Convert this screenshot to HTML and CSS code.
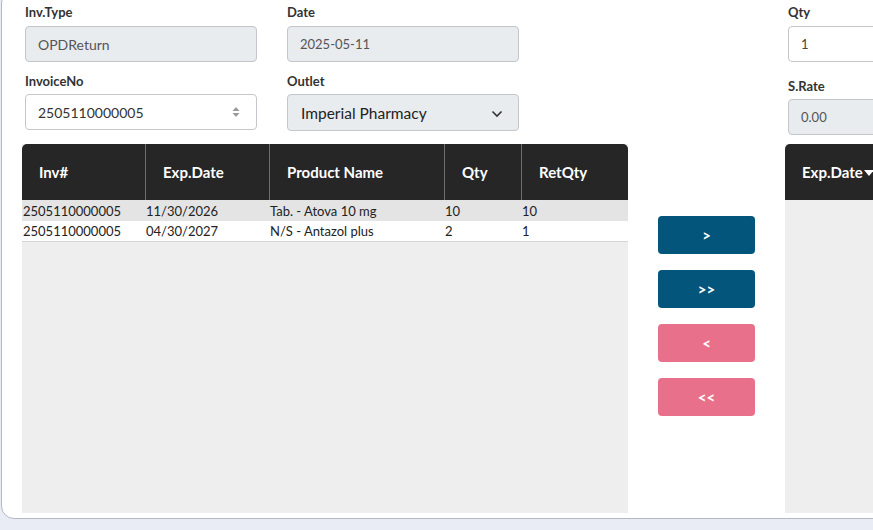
FILE: index.html
```html
<!DOCTYPE html>
<html>
<head>
<meta charset="utf-8">
<link rel="stylesheet" href="styles.css">
</head>
<body>
<div class="card">
  <div class="form">
    <div class="col">
      <div class="field">
        <label class="lbl">Inv.Type</label>
        <div class="inp ro">OPDReturn</div>
      </div>
      <div class="field">
        <label class="lbl">InvoiceNo</label>
        <div class="inp num">2505110000005
          <svg class="spin" width="10" height="14" viewBox="0 0 10 14"><path d="M5 2 L8.5 6 L1.5 6 Z" fill="#9a9a9a"/><path d="M5 12 L8.5 8 L1.5 8 Z" fill="#9a9a9a"/></svg>
        </div>
      </div>
    </div>
    <div class="col">
      <div class="field">
        <label class="lbl">Date</label>
        <div class="inp ro small">2025-05-11</div>
      </div>
      <div class="field">
        <label class="lbl">Outlet</label>
        <div class="inp ro sel">Imperial Pharmacy
          <svg class="chev" width="12" height="8" viewBox="0 0 12 8"><path d="M1.5 1.5 L6 6 L10.5 1.5" fill="none" stroke="#333" stroke-width="1.6"/></svg>
        </div>
      </div>
    </div>
    <div class="col spacer"></div>
    <div class="col">
      <div class="field">
        <label class="lbl">Qty</label>
        <div class="inp small">1</div>
      </div>
      <div class="field low">
        <label class="lbl">S.Rate</label>
        <div class="inp ro small">0.00</div>
      </div>
    </div>
  </div>

  <div class="main">
    <div class="grid">
      <div class="thead">
        <div class="th w1">Inv#</div>
        <div class="th w2">Exp.Date</div>
        <div class="th w3">Product Name</div>
        <div class="th w4">Qty</div>
        <div class="th w5">RetQty</div>
      </div>
      <div class="tbody">
        <div class="tr alt">
          <div class="td w1">2505110000005</div>
          <div class="td w2">11/30/2026</div>
          <div class="td w3">Tab. - Atova 10 mg</div>
          <div class="td w4">10</div>
          <div class="td w5">10</div>
        </div>
        <div class="tr">
          <div class="td w1">2505110000005</div>
          <div class="td w2">04/30/2027</div>
          <div class="td w3">N/S - Antazol plus</div>
          <div class="td w4">2</div>
          <div class="td w5">1</div>
        </div>
      </div>
    </div>

    <div class="actions">
      <button class="btn blue">&gt;</button>
      <button class="btn blue">&gt;&gt;</button>
      <button class="btn pink">&lt;</button>
      <button class="btn pink">&lt;&lt;</button>
    </div>

    <div class="grid right">
      <div class="thead">
        <div class="th">Exp.Date<svg class="caret" width="10" height="6" viewBox="0 0 10 6"><path d="M0 0 L10 0 L5 6 Z" fill="#fff"/></svg></div>
      </div>
    </div>
  </div>
</div>
</body>
</html>
```

FILE: styles.css
```css
html, body {
  margin: 0;
  padding: 0;
}
body {
  background: #e9ecf5;
  font-family: "Lato", "Open Sans", sans-serif;
  color: #333;
  height: 530px;
  overflow: hidden;
}
.card {
  margin-top: -10px;
  margin-left: 1px;
  width: 960px;
  height: 529px;
  box-sizing: border-box;
  background: #fff;
  border: 1px solid #b4b8c0;
  border-radius: 13px;
  padding: 0 0 5px 20px;
  display: flex;
  flex-direction: column;
}
.form {
  display: grid;
  grid-template-columns: 232px 232px 209px 232px;
  column-gap: 30px;
  padding-left: 3px;
  padding-top: 12px;
}
.field {
  display: flex;
  flex-direction: column;
}
.field + .field {
  margin-top: 10px;
}
.field.low {
  margin-top: 15px;
}
.lbl {
  font-size: 13px;
  font-weight: 700;
  line-height: 18px;
  color: #333;
  margin-bottom: 5px;
}
.field + .field .lbl {
  margin-bottom: 4px;
}
.inp {
  height: 36px;
  box-sizing: border-box;
  border: 1px solid #c3c7cc;
  border-radius: 4px;
  background: #fff;
  display: flex;
  align-items: center;
  padding: 0 12px;
  font-size: 14px;
  color: #444;
  position: relative;
}
.inp.ro {
  background: #e9ecef;
  color: #555;
}
.inp.small {
  font-size: 13px;
}
.inp.num {
  color: #333;
}
.inp.sel {
  font-size: 15.5px;
  color: #222;
  padding-left: 13px;
  height: 37px;
}
.spin {
  position: absolute;
  right: 15px;
  top: 10px;
}
.chev {
  position: absolute;
  right: 15px;
  top: 15px;
}
.main {
  margin-top: 9px;
  flex: 1;
  display: grid;
  grid-template-columns: 606px 157px 1fr;
  min-height: 0;
}
.grid {
  background: #eeeeee;
  display: flex;
  flex-direction: column;
}
.thead {
  height: 56px;
  background: #262626;
  display: flex;
  border-radius: 5px 5px 0 0;
}
.th {
  color: #fff;
  font-size: 15px;
  font-weight: 700;
  display: flex;
  align-items: center;
  padding-left: 17px;
  box-sizing: border-box;
  border-left: 1px solid #6e6e6e;
}
.th:first-child {
  border-left: none;
}
.w1 { width: 123px; }
.w2 { width: 124px; }
.w3 { width: 175px; }
.w4 { width: 77px; }
.w5 { width: 107px; }
.tbody {
  border-bottom: 1px solid #d6d6d6;
}
.tr {
  display: flex;
  height: 20px;
  background: #fff;
}
.tr.alt {
  background: #e4e4e4;
  height: 21px;
}
.td {
  font-size: 13px;
  color: #222;
  display: flex;
  align-items: center;
  padding-left: 1px;
  box-sizing: border-box;
}
.actions {
  display: flex;
  flex-direction: column;
  gap: 16px;
  padding-top: 72px;
  padding-left: 30px;
}
.btn {
  width: 97px;
  height: 38px;
  border: none;
  border-radius: 4px;
  color: #fff;
  font-family: "Lato", sans-serif;
  font-weight: 700;
  font-size: 15px;
  cursor: pointer;
}
.btn.blue { background: #03557b; }
.btn.pink { background: #e8708a; }
.right .thead {
  border-radius: 5px 0 0 0;
}
.caret {
  margin-left: 1px;
  margin-top: 2px;
}
```
